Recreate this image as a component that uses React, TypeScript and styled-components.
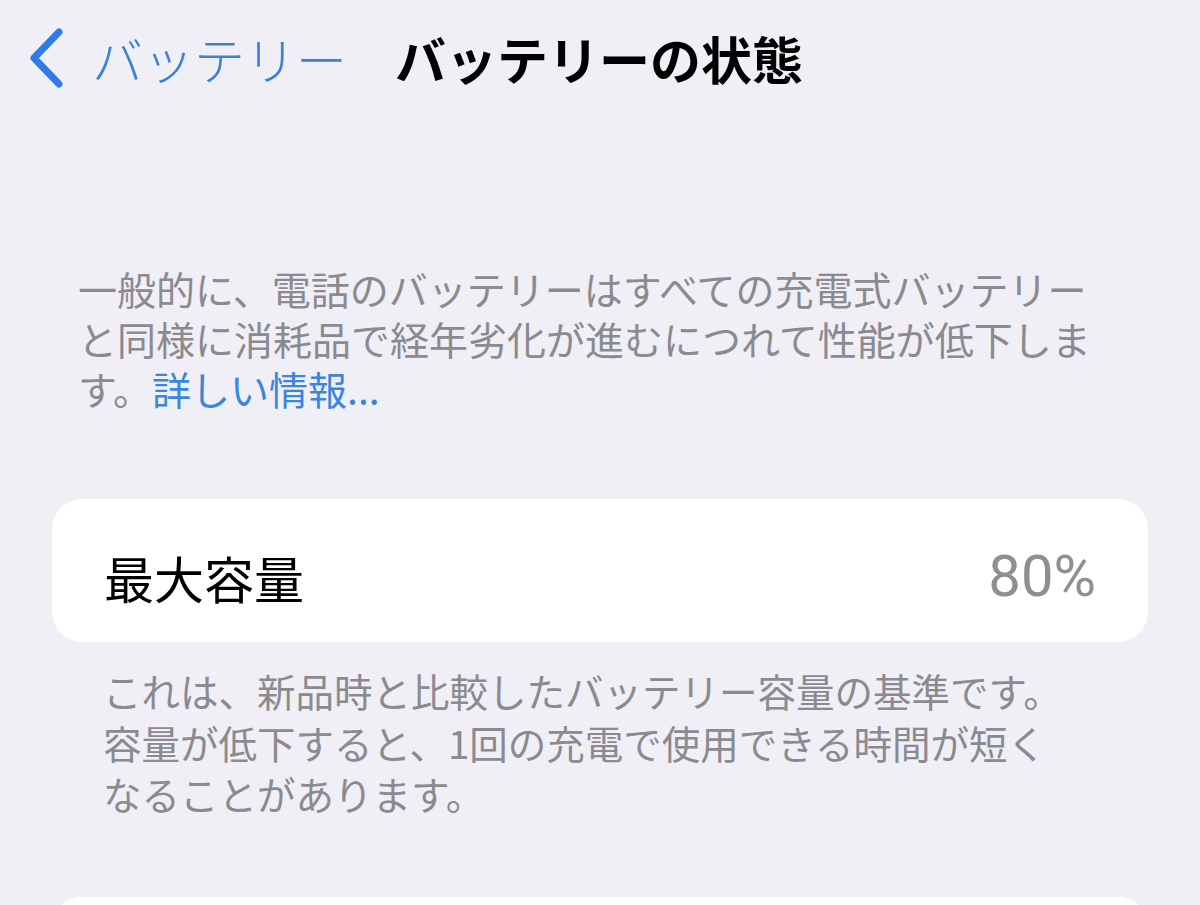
import styled, { createGlobalStyle } from "styled-components";

const GlobalStyle = createGlobalStyle`
  html, body {
    margin: 0;
    padding: 0;
    background: #f0eff5;
  }
  body {
    font-family: "Noto Sans CJK JP", "Noto Sans", sans-serif;
    -webkit-font-smoothing: antialiased;
  }
`;

const BackChevron = () => (
  <svg width="40" height="62" viewBox="0 0 40 62" fill="none">
    <path
      d="M33 5 L8 31 L33 57"
      stroke="#2f7be8"
      strokeWidth="7"
      strokeLinecap="round"
      strokeLinejoin="round"
    />
  </svg>
);

const App = () => {
  return (
    <>
      <GlobalStyle />
      <Page>
        <NavBar>
          <BackButton>
            <BackChevron />
            <BackLabel>バッテリー</BackLabel>
          </BackButton>
          <Title>バッテリーの状態</Title>
        </NavBar>

        <Intro>
          <Line>一般的に、電話のバッテリーはすべての充電式バッテリー</Line>
          <Line>と同様に消耗品で経年劣化が進むにつれて性能が低下しま</Line>
          <Line>
            す。<Link>詳しい情報...</Link>
          </Line>
        </Intro>

        <Card>
          <RowLabel>最大容量</RowLabel>
          <RowValue>80%</RowValue>
        </Card>

        <Footnote>
          <Line>これは、新品時と比較したバッテリー容量の基準です。</Line>
          <Line>容量が低下すると、1回の充電で使用できる時間が短く</Line>
          <Line>なることがあります。</Line>
        </Footnote>

        <NextCard />
      </Page>
    </>
  );
};

export default App;

const Page = styled.div`
  width: 1200px;
  height: 905px;
  overflow: hidden;
  background: #f0eff5;
`;

const NavBar = styled.div`
  display: flex;
  align-items: center;
  height: 116px;
  padding-left: 26px;
`;

const BackButton = styled.div`
  display: flex;
  align-items: center;
  gap: 26px;
`;

const BackLabel = styled.span`
  font-size: 51px;
  font-weight: 300;
  color: #3a80dc;
  line-height: 1;
`;

const Title = styled.h1`
  margin: 0 0 0 48px;
  font-size: 51px;
  font-weight: 700;
  color: #000;
  line-height: 1;
`;

const Intro = styled.div`
  display: flex;
  flex-direction: column;
  gap: 10px;
  margin-top: 152px;
  padding-left: 78px;
  font-size: 39px;
  color: #8a8a8f;
`;

const Line = styled.div`
  height: 40px;
  line-height: 40px;
  white-space: nowrap;
`;

const Link = styled.span`
  color: #3a86dc;
`;

const Card = styled.div`
  display: flex;
  align-items: center;
  justify-content: space-between;
  height: 143px;
  margin: 91px 52px 0;
  padding: 0 52px;
  background: #fff;
  border-radius: 30px;
`;

const RowLabel = styled.span`
  font-size: 50px;
  color: #000;
  line-height: 1;
  padding-top: 12px;
`;

const RowValue = styled.span`
  font-family: Roboto, "Liberation Sans", sans-serif;
  font-size: 58px;
  color: #8e8e93;
  line-height: 1;
  padding-top: 10px;
`;

const Footnote = styled.div`
  display: flex;
  flex-direction: column;
  gap: 11.5px;
  margin-top: 28px;
  padding-left: 103px;
  font-size: 38.5px;
  color: #8a8a8f;
`;

const NextCard = styled.div`
  height: 120px;
  margin: 84px 52px 0;
  background: #fff;
  border-radius: 30px;
`;
